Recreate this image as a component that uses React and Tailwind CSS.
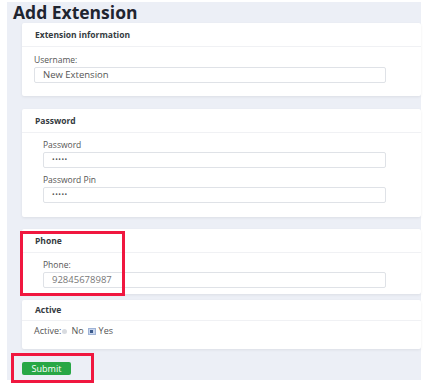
import React from "react";

const Card = ({ title, headH = "h-[24px]", children, className = "" }) => (
  <div className={`w-[399px] bg-white rounded-[2px] shadow-[0_1px_3px_rgba(0,0,0,0.07)] ${className}`}>
    <div className={`${headH} flex items-center pt-[1px] px-[13px] border-b border-[#f0f1f4] text-[8.5px] font-bold text-[#343a40]`}>
      {title}
    </div>
    {children}
  </div>
);

const Label = ({ children }) => (
  <div className="h-[12px] leading-[12px] text-[8.5px] text-[#555]">{children}</div>
);

const Input = ({ value, w = "w-[352px]" }) => (
  <div className={`${w} h-[16px] mt-[1px] px-[8px] flex items-center bg-white border border-[#dfe2e7] rounded-[2px] text-[9.5px] text-[#555]`}>
    {value}
  </div>
);

const Dots = () => <span className="text-[7px] tracking-[0.5px]">•••••</span>;

export default function App() {
  return (
    <div className="relative w-[442px] h-[391px] bg-white font-['Open_Sans',sans-serif]">
      <div className="ml-[7px] mt-[2px] w-[414px] h-[378px] bg-[#eceff6]">
        <h1 className="h-[21px] leading-[21px] pl-[6px] text-[17.5px] font-bold text-[#1f2530]">
          Add Extension
        </h1>

        <div className="pl-[15px]">
          <Card title="Extension information">
            <div className="pl-[12px] pt-[7px] pb-[13px]">
              <Label>Username:</Label>
              <Input value="New Extension" />
            </div>
          </Card>

          <Card title="Password" className="mt-[13px]">
            <div className="pl-[21px] pt-[6px] pb-[14px]">
              <Label>Password</Label>
              <Input w="w-[343px]" value={<Dots />} />
              <div className="mt-[6px]">
                <Label>Password Pin</Label>
              </div>
              <Input w="w-[343px]" value={<Dots />} />
            </div>
          </Card>

          <Card title="Phone" className="mt-[12px]">
            <div className="pl-[21px] pt-[6px] pb-[6px]">
              <Label>Phone:</Label>
              <Input w="w-[343px]" value={<span className="text-[#777]">92845678987</span>} />
            </div>
          </Card>

          <Card title="Active" headH="h-[21px]" className="mt-[6px]">
            <div className="pl-[12px] pt-[4px] pb-[12px] h-[28px] flex items-center text-[9px] text-[#555]">
              <span>Active:</span>
              <span className="inline-block w-[5px] h-[5px] rounded-full bg-[#d8dbe0] ml-[1px]" />
              <span className="ml-[4px]">No</span>
              <span className="ml-[4px] inline-flex items-center justify-center w-[8px] h-[7px] bg-[#c8d6ee] border border-[#9fb3d6]">
                <span className="w-[3px] h-[3px] bg-[#3c5a8c]" />
              </span>
              <span className="ml-[3px]">Yes</span>
            </div>
          </Card>

          <button className="mt-[13px] w-[49px] h-[13px] rounded-[2px] bg-[#28a745] text-white text-[9px] flex items-center justify-center">
            Submit
          </button>
        </div>
      </div>

      {/* annotation boxes */}
      <div className="absolute left-[20px] top-[229px] w-[105px] h-[65px] border-[3px] border-[#f0173f]" />
      <div className="absolute left-[11px] top-[351px] w-[83px] h-[30px] border-[3px] border-[#f0173f]" />
    </div>
  );
}
